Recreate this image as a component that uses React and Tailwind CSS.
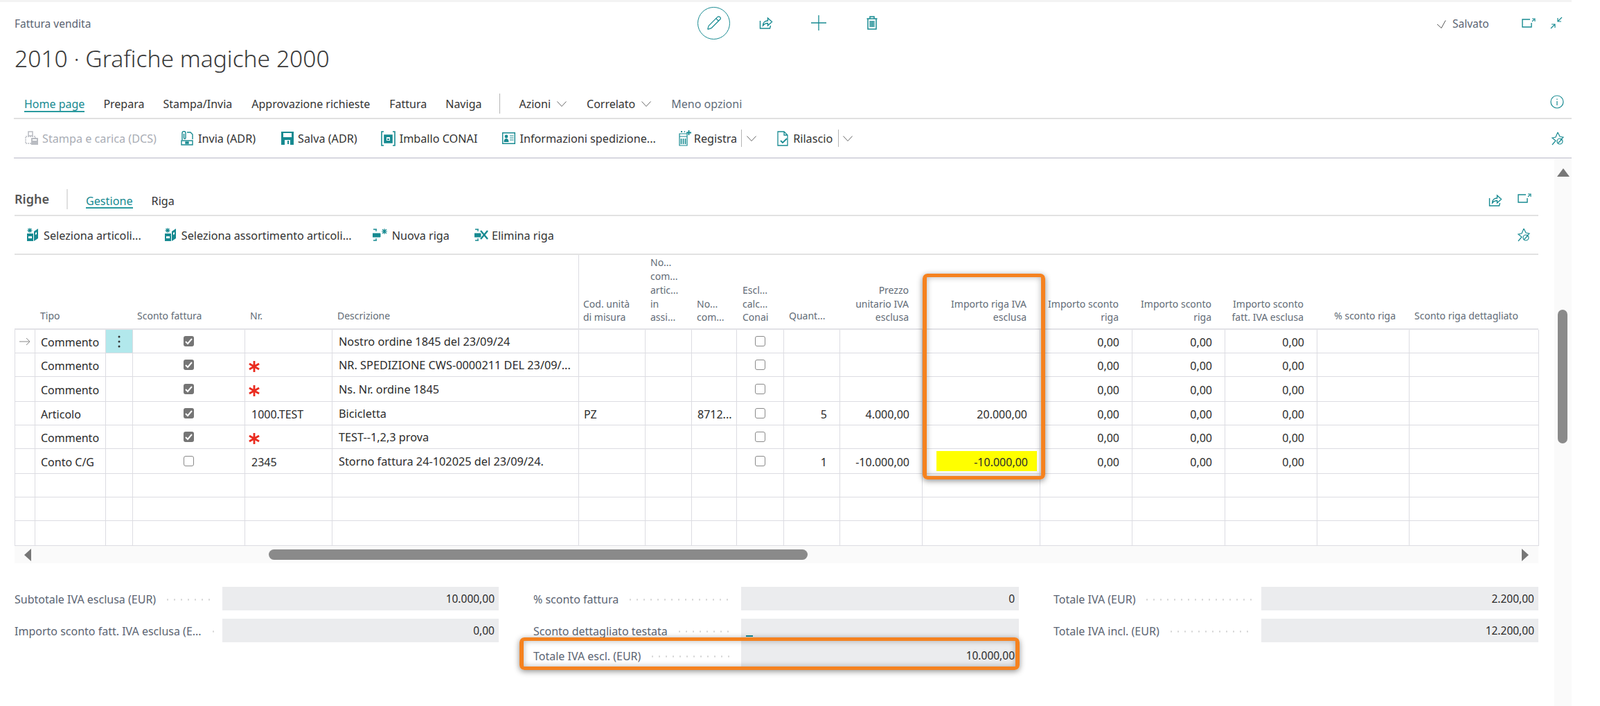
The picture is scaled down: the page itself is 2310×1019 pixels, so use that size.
import React from "react";
import { Pencil } from "lucide-react";

const T = "#178a91";

const Ico = ({ w = 20, h = 20, vb = "0 0 20 20", sw = "1.2", children, className = "" }) => (
  <svg width={w} height={h} viewBox={vb} fill="none" stroke={T} strokeWidth={sw} className={"shrink-0 " + className}>
    {children}
  </svg>
);

const ShareIco = () => (
  <Ico sw="1.4">
    <path d="M1.500 7v11h14l1-4" />
    <path d="M5.500 14c0-4.500 3-7 7-7V3l6 5.500-6 5.500v-3.500c-3 0-5 1-7 3.500z" />
  </Ico>
);
const PlusIco = () => (
  <Ico w={22} h={22} vb="0 0 22 22" sw="1.300">
    <path d="M11 0v22M0 11h22" />
  </Ico>
);
const TrashIco = () => (
  <Ico w={16} h={20} vb="0 0 16 20" sw="1.500">
    <path d="M0.500 4h15M5 4V1h6v3M2 4v15h12V4" />
    <path d="M5.500 7v9M8 7v9M10.500 7v9" strokeWidth="1.800" />
  </Ico>
);
const OpenIco = () => (
  <Ico w={20} h={14} vb="0 0 20 14">
    <path d="M12 2H1v11h13V7" strokeWidth="1.400" />
    <path d="M15 5l3-3M15 1h4v4" />
  </Ico>
);
const CollapseIco = () => (
  <Ico>
    <path d="M18 2l-6 6M12 3v5h5" />
    <path d="M2 18l6-6M8 17v-5H3" />
  </Ico>
);
const InfoIco = () => (
  <Ico>
    <circle cx="10" cy="10" r="9" />
    <path d="M10 9v6M10 5.500v1.500" />
  </Ico>
);
const PinIco = () => (
  <Ico>
    <path d="M10 1l3 6 5 1-4 4M2 19l5-6-5-4 5-1 3-7" />
    <circle cx="13" cy="14" r="4" />
    <path d="M10 17l6-6" />
  </Ico>
);
const PrintIco = ({ c = T }) => (
  <svg width="22" height="22" viewBox="0 0 22 22" className="shrink-0">
    <path d="M6 1h6v6H6z" fill="none" stroke={c} strokeWidth="1.500" />
    <path d="M2 8h14v10H2z" fill="none" stroke={c} strokeWidth="1.500" strokeDasharray="2 1" />
    <path d="M10 10h10v10H10z" fill={c} />
    <path d="M12 12h6v2h-6z" fill="#fff" />
  </svg>
);
const SendIco = () => (
  <svg width="20" height="22" viewBox="0 0 20 22" className="shrink-0" fill="none" stroke={T} strokeWidth="1.400">
    <path d="M3 13V3a2.500 2.500 0 015 0v7a1.200 1.200 0 01-2.500 0V4" />
    <path d="M10 2h5l3 3v7" />
    <path d="M2 14h16v6H2z" />
    <path d="M8 16h4v2H8z" fill={T} />
  </svg>
);
const SaveIco = () => (
  <svg width="18" height="19" viewBox="0 0 18 19" className="shrink-0">
    <path d="M0 0h18v19H0z" fill={T} />
    <path d="M3 2h12v6H3z" fill="#fff" />
    <path d="M5 12h8v7H5z" fill="#fff" />
    <path d="M9 13h2v5H9z" fill={T} />
  </svg>
);
const PackIco = () => (
  <svg width="21" height="22" viewBox="0 0 21 22" className="shrink-0" fill="none" stroke={T} strokeWidth="1.600">
    <path d="M4 1H1v20h3M17 1h3v20h-3" />
    <path d="M5 6h11v11H5z" fill={T} />
    <path d="M8 9h5v5H8z" fill="#fff" stroke="none" />
    <path d="M9 11h3v2H9z" fill={T} stroke="none" />
  </svg>
);
const CardIco = () => (
  <svg width="19" height="17" viewBox="0 0 19 17" className="shrink-0" fill="none">
    <path d="M.7.7h17.600v15.600H.7z" stroke={T} strokeWidth="1.400" />
    <circle cx="6" cy="6" r="2.400" fill={T} />
    <path d="M2.500 14c0-3.500 1.500-5 3.500-5s3.500 1.500 3.500 5z" fill={T} />
    <path d="M11 5h5.500M11 8h5.500M11 11h5.500" stroke={T} strokeWidth="1.200" />
  </svg>
);
const PostIco = () => (
  <svg width="18" height="23" viewBox="0 0 18 23" className="shrink-0" fill="none" stroke={T} strokeWidth="1.200">
    <path d="M1 5h11v17H1zM1 9h11" />
    <path d="M3.500 12v8M6.500 12v8M9.500 12v8" strokeWidth="1.600" />
    <path d="M3 2h2M8 2h1M14.500 0v7M11 3.500h7" strokeWidth="1.800" />
  </svg>
);
const ReleaseIco = () => (
  <svg width="17" height="22" viewBox="0 0 17 22" className="shrink-0" fill="none" stroke={T} strokeWidth="1.300">
    <path d="M1 1h9l5 5v15H1zM10 1v5h5" />
    <path d="M5 14l3 3 6-6" strokeWidth="1.800" />
  </svg>
);
const SelectIco = () => (
  <svg width="18" height="20" viewBox="0 0 18 20" className="shrink-0">
    <path d="M1 8h9v11H1z" fill={T} />
    <path d="M11 5l6-4v14l-6 4z" fill={T} />
    <path d="M5 0v7M1.500 3.500h7M2.500 1l5 5M7.500 1l-5 5" stroke={T} strokeWidth="1.100" />
    <path d="M3 12h5v3H3z" fill="#fff" />
    <path d="M13 7l2-1v3l-2 1z" fill="#fff" />
  </svg>
);
const NewLineIco = () => (
  <svg width="22" height="18" viewBox="0 0 22 18" className="shrink-0" fill="none" stroke={T}>
    <path d="M1 1h5M5 1v3M1 17h5M5 14v3" strokeWidth="1.300" />
    <path d="M0 7h11v5H0z" fill={T} />
    <path d="M17 0v8M13 4h8M14 1l6 6M20 1l-6 6" strokeWidth="1.200" />
  </svg>
);
const DelLineIco = () => (
  <svg width="20" height="18" viewBox="0 0 20 18" className="shrink-0" fill="none" stroke={T}>
    <path d="M1 1h5M5 1v3M1 17h5M5 14v3" strokeWidth="1.300" />
    <path d="M0 7h9v5H0z" fill={T} />
    <path d="M9 3l10 12M19 3L9 15" strokeWidth="2.400" />
  </svg>
);
const Chev = ({ className = "" }) => (
  <svg width="14" height="8" viewBox="0 0 14 8" fill="none" stroke="#666" strokeWidth="1" className={"shrink-0 " + className}>
    <path d="M.5.500L7 7.500 13.500.500" />
  </svg>
);
const CheckThin = ({ c = "#555" }) => (
  <svg width="18" height="12" viewBox="0 0 18 12" fill="none" stroke={c} strokeWidth="1" className="shrink-0">
    <path d="M1 6L7 11.500 13 .500" />
  </svg>
);
const Star = () => (
  <svg width="16" height="16" viewBox="0 0 17 17" stroke="#ea2b1f" strokeWidth="3" className="ml-[-4px] mt-[3px]">
    <path d="M8.500 0v17M1 4.200l15 8.600M16 4.200L1 12.800" />
  </svg>
);
const Box = ({ on }) =>
  on ? (
    <span className="w-[15px] h-[15px] rounded-[3px] bg-[#757575] flex items-center justify-center">
      <svg width="11" height="10" viewBox="0 0 11 10" fill="none" stroke="#fff" strokeWidth="2"><path d="M1 5l3 3 6-7" /></svg>
    </span>
  ) : (
    <span className="w-[15px] h-[15px] rounded-[3px] bg-white border border-[#8a8a8a]" />
  );

const cols =
  "grid grid-cols-[30px_102px_39px_162px_126px_356px_96px_67px_65px_68px_81px_119px_170px_133px_134px_133px_133px_187px]";

const Top = () => (
  <div className="w-[2269px]">
    <div className="h-[3px] bg-[#f3f3f3]" />
    <div className="h-[60px] flex items-center">
      <div className="w-[1007px] pl-[21px] pt-[4px] text-[15.5px] text-[#5b6472]">Fattura vendita</div>
      <div className="w-[47px] h-[47px] rounded-full border border-[#178a91] flex items-center justify-center">
        <Pencil size={22} strokeWidth={1.3} color={T} />
      </div>
      <div className="ml-[42px]"><ShareIco /></div>
      <div className="ml-[55px]"><PlusIco /></div>
      <div className="ml-[58px]"><TrashIco /></div>
      <div className="ml-[807px] flex items-center gap-[5px] text-[15.5px] text-[#5b6472] pt-[4px]">
        <CheckThin />
        <span>Salvato</span>
      </div>
      <div className="ml-[47px]"><OpenIco /></div>
      <div className="ml-[20px]"><CollapseIco /></div>
    </div>
    <div className="pl-[21px] h-[50px] flex items-center text-[33.6px] font-light text-[#3a3a3a] pb-[8px]">2010 · Grafiche magiche 2000</div>
    <div className="h-[20px]" />
    <div className="ml-[20px] h-[39px] border-b-2 border-[#e0e0e0] flex items-center text-[16px] text-[#333] pl-[15px] pb-[4px]">
      <span className="text-[#178a91] border-b-2 border-[#2a9a9f] leading-[20px] mt-[2px]">Home page</span>
      <span className="ml-[27px]">Prepara</span>
      <span className="ml-[27px]">Stampa/Invia</span>
      <span className="ml-[28px]">Approvazione richieste</span>
      <span className="ml-[28px]">Fattura</span>
      <span className="ml-[27px]">Naviga</span>
      <span className="ml-[26px] h-[29px] w-px bg-[#b5b5b5]" />
      <span className="ml-[27px]">Azioni</span>
      <Chev className="ml-[9px]" />
      <span className="ml-[29px]">Correlato</span>
      <Chev className="ml-[9px]" />
      <span className="ml-[29px] text-[#5f6b7a]">Meno opzioni</span>
      <div className="ml-auto mr-[11px] mb-[6px]"><InfoIco /></div>
    </div>
    <div className="ml-[20px] h-[57px] border-b-2 border-[#d8d8e0] flex items-center text-[16.2px] text-[#333] pl-[15px]">
      <PrintIco c="#b9bcc2" />
      <span className="ml-[4px] text-[#a9adb5] pt-[1px]">Stampa e carica (DCS)</span>
      <span className="ml-[34px]"><SendIco /></span>
      <span className="ml-[6px] pt-[1px]">Invia (ADR)</span>
      <span className="ml-[37px]"><SaveIco /></span>
      <span className="ml-[6px] pt-[1px]">Salva (ADR)</span>
      <span className="ml-[34px]"><PackIco /></span>
      <span className="ml-[6px] pt-[1px]">Imballo CONAI</span>
      <span className="ml-[36px]"><CardIco /></span>
      <span className="ml-[6px] pt-[1px]">Informazioni spedizione...</span>
      <span className="ml-[33px]"><PostIco /></span>
      <span className="ml-[4px] pt-[1px]">Registra</span>
      <span className="ml-[6px] h-[25px] w-px bg-[#b5b5b5]" />
      <Chev className="ml-[7px]" />
      <span className="ml-[30px]"><ReleaseIco /></span>
      <span className="ml-[6px] pt-[1px]">Rilascio</span>
      <span className="ml-[8px] h-[25px] w-px bg-[#b5b5b5]" />
      <Chev className="ml-[6px]" />
      <div className="ml-auto mr-[10px]"><PinIco /></div>
    </div>
  </div>
);

const heads = [
  {},
  { l: ["Tipo"], s: 1 },
  {},
  { l: ["Sconto fattura"], s: 1, pl: "pl-[6px]" },
  { l: ["Nr."], s: 1 },
  { l: ["Descrizione"], s: 1, line: 1 },
  { l: ["Cod. unità", "di misura"], pl: "pl-[6px]" },
  { l: ["No...", "com...", "artic...", "in", "assi..."] },
  { l: ["No...", "com..."] },
  { l: ["Escl...", "calc...", "Conai"], pl: "pl-[8px]" },
  { l: ["Quant..."], s: 1 },
  { l: ["Prezzo", "unitario IVA", "esclusa"], r: 1 },
  { l: ["Importo riga IVA", "esclusa"], r: 1 },
  { l: ["Importo sconto", "riga"], r: 1 },
  { l: ["Importo sconto", "riga"], r: 1 },
  { l: ["Importo sconto", "fatt. IVA esclusa"], r: 1 },
  { l: ["% sconto riga"], s: 1, r: 1 },
  { l: ["Sconto riga dettagliato"], s: 1 },
];

const rows = [
  { h: "h-[34px]", t: "Commento", c: 1, d: "Nostro ordine 1845 del 23/09/24", z: 1, arrow: 1, menu: 1 },
  { h: "h-[34px]", t: "Commento", c: 1, star: 1, d: "NR. SPEDIZIONE CWS-0000211 DEL 23/09/...", z: 1 },
  { h: "h-[36px]", t: "Commento", c: 1, star: 1, d: "Ns. Nr. ordine 1845", z: 1 },
  { h: "h-[34px]", t: "Articolo", c: 1, n: "1000.TEST", d: "Bicicletta", u: "PZ", v: "8712...", q: "5", p: "4.000,00", a: "20.000,00", z: 1 },
  { h: "h-[34px]", t: "Commento", c: 1, star: 1, d: "TEST--1,2,3 prova", z: 1 },
  { h: "h-[36px]", t: "Conto C/G", n: "2345", d: "Storno fattura 24-102025 del 23/09/24.", q: "1", p: "-10.000,00", a: "-10.000,00", y: 1, z: 1 },
  { h: "h-[34px]" },
  { h: "h-[34px]" },
  { h: "h-[36px]", last: 1 },
];

const cell = "border-r border-b border-[#dcdce2] flex items-center min-w-0 whitespace-nowrap";
const num = cell + " justify-end pr-[18px] pt-[2px]";

const Table = () => (
  <div>
    <div className={cols + " h-[108px] border-b-2 border-[#e2e2e6] text-[14px] leading-[19.7px] text-[#626b76]"}>
      {heads.map((h, i) => (
        <div
          key={i}
          className={
            "flex flex-col justify-end whitespace-nowrap " +
            (h.s ? "pb-[8px] " : "pb-[6px] ") +
            (h.r ? "items-end pr-[20px] " : (h.pl || "pl-[7px] ")) +
            (h.line ? " border-r border-[#dcdce2]" : "")
          }
        >
          {(h.l || []).map((x, j) => <span key={j}>{x}</span>)}
        </div>
      ))}
    </div>
    {rows.map((r, i) => (
      <div key={i} className={cols + " " + r.h + " text-[16px] text-[#2b2b2b]"}>
        <div className={cell + " border-l justify-center"}>
          {r.arrow ? (
            <svg width="16" height="12" viewBox="0 0 16 12" fill="none" stroke="#888" strokeWidth="1"><path d="M0 6h15M10 1l5 5-5 5" /></svg>
          ) : null}
        </div>
        <div className={cell + " pl-[8px] pt-[2px]"}>{r.t}</div>
        <div className={cell + " justify-center " + (r.menu ? "bg-[#b2e8ec]" : "")}>
          {r.menu ? (
            <svg width="4" height="18" viewBox="0 0 4 18" fill="#333"><circle cx="2" cy="2" r="1.500" /><circle cx="2" cy="9" r="1.500" /><circle cx="2" cy="16" r="1.500" /></svg>
          ) : null}
        </div>
        <div className={cell + " justify-center"}>{r.t ? <Box on={r.c} /> : null}</div>
        <div className={cell + " pl-[9px] pt-[2px]"}>{r.star ? <Star /> : r.n}</div>
        <div className={cell + " pl-[9px] pt-[2px] text-[16.3px]"}>{r.d}</div>
        <div className={cell + " pl-[7px] pt-[2px]"}>{r.u}</div>
        <div className={cell} />
        <div className={cell + " pl-[8px] pt-[2px]"}>{r.v}</div>
        <div className={cell + " justify-center"}>{r.t ? <Box /> : null}</div>
        <div className={num}>{r.q}</div>
        <div className={num}>{r.p}</div>
        {r.y ? (
          <div className={cell + " pl-[20px] pr-[4px] py-[3px]"}>
            <div className="w-full h-full bg-[#ffff00] flex items-center justify-end pr-[13px] pt-[2px]">{r.a}</div>
          </div>
        ) : (
          <div className={num}>{r.a}</div>
        )}
        <div className={num}>{r.z ? "0,00" : ""}</div>
        <div className={num}>{r.z ? "0,00" : ""}</div>
        <div className={num}>{r.z ? "0,00" : ""}</div>
        <div className={cell} />
        <div className={cell} />
      </div>
    ))}
  </div>
);

const Field = ({ label, value, h = "h-[34px]", dash, down }) => (
  <div className={"flex " + h}>
    <div className={"w-[300px] flex items-center pr-[11px] text-[16px] text-[#5b6472] whitespace-nowrap " + (down ? "pt-[4px]" : "pt-[2px]")}>
      <span>{label}</span>
      <span className="flex-1 ml-[12px] h-[3px] bg-[radial-gradient(circle,#d4d4d4_1px,transparent_1.3px)] bg-[length:10px_3px]" />
    </div>
    <div className={"flex-1 bg-[#ebecee] flex items-center justify-end pr-[6px] text-[15.5px] text-[#2b2b2b] relative " + (down ? "pt-[4px]" : "pt-[2px]")}>
      {value}
      {dash ? <span className="absolute left-[7px] top-[24px] w-[10px] h-[2px] bg-[#178a91]" /> : null}
    </div>
  </div>
);

const Main = () => (
  <div className="flex flex-1 min-h-0">
    <div className="w-[2244px] pl-[21px] pr-[23px]">
      <div className="h-[44px]" />
      <div className="h-[39px] border-b-2 border-[#e2e2e2] flex items-start">
        <span className="text-[18px] font-semibold text-[#555] leading-[28px]">Righe</span>
        <span className="ml-[25px] h-[29px] w-[2px] bg-[#e0e0e0]" />
        <span className="ml-[26px] text-[16.2px] text-[#178a91] border-b-2 border-[#2a9a9f] leading-[34px] h-[28px]">Gestione</span>
        <span className="ml-[27px] text-[16.2px] text-[#333] leading-[34px] h-[28px]">Riga</span>
        <div className="ml-auto mr-[10px] flex gap-[22px] pt-[6px]"><ShareIco /><OpenIco /></div>
      </div>
      <div className="h-[56px] border-b-2 border-[#e2e2e2] flex items-center text-[16.2px] text-[#333] pl-[17px]">
        <SelectIco />
        <span className="ml-[7px] pt-[3px]">Seleziona articoli...</span>
        <span className="ml-[33px]"><SelectIco /></span>
        <span className="ml-[7px] pt-[3px]">Seleziona assortimento articoli...</span>
        <span className="ml-[30px]"><NewLineIco /></span>
        <span className="ml-[6px] pt-[3px]">Nuova riga</span>
        <span className="ml-[36px]"><DelLineIco /></span>
        <span className="ml-[5px] pt-[3px]">Elimina riga</span>
        <div className="ml-auto mr-[11px]"><PinIco /></div>
      </div>
      <Table />
      <div className="h-[25px] bg-[#fafafa] flex items-center relative">
        <svg width="10" height="18" viewBox="0 0 10 18" className="ml-[14px]" fill="#777"><path d="M10 0v18L0 9z" /></svg>
        <div className="absolute left-[367px] w-[778px] h-[15px] rounded-full bg-[#8a8a8a]" />
        <svg width="10" height="18" viewBox="0 0 10 18" className="ml-auto mr-[14px]" fill="#777"><path d="M0 0v18l10-9z" /></svg>
      </div>
      <div className="mt-[34px] flex gap-[50px]">
        <div className="w-[699px] flex flex-col gap-[12px]">
          <Field label="Subtotale IVA esclusa (EUR)" value="10.000,00" />
          <Field label="Importo sconto fatt. IVA esclusa (E..." value="0,00" />
        </div>
        <div className="w-[701px] flex flex-col">
          <Field label="% sconto fattura" value="0" />
          <div className="h-[12px]" />
          <Field label="Sconto dettagliato testata" dash />
          <Field label="Totale IVA escl. (EUR)" value="10.000,00" h="h-[36px]" down />
        </div>
        <div className="w-[700px] flex flex-col gap-[12px]">
          <Field label="Totale IVA (EUR)" value="2.200,00" />
          <Field label="Totale IVA incl. (EUR)" value="12.200,00" />
        </div>
      </div>
    </div>
    <div className="w-[25px] bg-[#fafafa] flex flex-col items-center pt-[14px] relative">
      <svg width="18" height="12" viewBox="0 0 18 12" fill="#777"><path d="M0 12h18L9 0z" /></svg>
      <div className="absolute top-[218px] left-[5px] w-[14px] h-[193px] rounded-full bg-[#8a8a8a]" />
    </div>
  </div>
);

const hl = "absolute border-[#f5821f] border-x-[6px] border-y-[5px] rounded-[7px] shadow-[0_2px_8px_rgba(0,0,0,0.45),inset_0_0_8px_rgba(0,0,0,0.3)]";

export default function App() {
  return (
    <div className="relative w-[2310px] h-[1019px] overflow-hidden bg-white flex flex-col font-['Open_Sans','Noto_Sans',sans-serif]">
      <Top />
      <Main />
      <div className={hl + " left-[1332px] top-[395px] w-[177px] h-[297px]"} />
      <div className={hl + " left-[750px] top-[920px] w-[722px] h-[47px]"} />
    </div>
  );
}
